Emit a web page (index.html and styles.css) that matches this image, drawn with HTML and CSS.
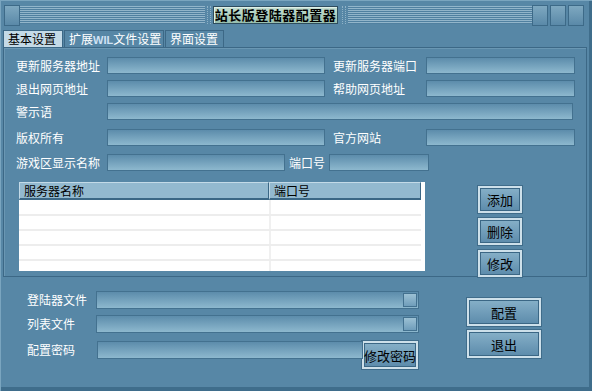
FILE: index.html
```html
<!DOCTYPE html>
<html lang="zh-CN">
<head>
  <meta charset="UTF-8">
  <title>站长版登陆器配置器</title>
  <link rel="stylesheet" href="styles.css">
</head>
<body>

  <div class="window">
    <div class="titlebar">
      <span class="tbtn"></span>
      <span class="stripes left"></span>
      <span class="dots"></span>
      <div class="title">站长版登陆器配置器</div>
      <span class="dots"></span>
      <span class="stripes right"></span>
      <span class="tbtn"></span>
      <span class="tbtn"></span>
      <span class="tbtn"></span>
    </div>

    <div class="tabs">
      <div class="tab active t1">基本设置</div>
      <div class="tab t2">扩展<span class="latin">WIL</span>文件设置</div>
      <div class="tab t3">界面设置</div>
    </div>

    <div class="panel">
      <div class="row">
        <span class="lbl">更新服务器地址</span>
        <span class="field w218"></span>
        <span class="lbl2">更新服务器端口</span>
        <span class="field w149"></span>
      </div>
      <div class="row">
        <span class="lbl">退出网页地址</span>
        <span class="field w218"></span>
        <span class="lbl2">帮助网页地址</span>
        <span class="field w149"></span>
      </div>
      <div class="row">
        <span class="lbl">警示语</span>
        <span class="field w466"></span>
      </div>
      <div class="row gap3">
        <span class="lbl">版权所有</span>
        <span class="field w218"></span>
        <span class="lbl2">官方网站</span>
        <span class="field w149"></span>
      </div>
      <div class="row gap2">
        <span class="lbl">游戏区显示名称</span>
        <span class="field w178"></span>
        <span class="lbl3">端口号</span>
        <span class="field w100"></span>
      </div>

      <div class="list-area">
        <div class="grid">
          <div class="grid-head">
            <span class="col name">服务器名称</span>
            <span class="col port">端口号</span>
          </div>
          <div class="grid-row"><span class="cell name"></span><span class="cell"></span></div>
          <div class="grid-row"><span class="cell name"></span><span class="cell"></span></div>
          <div class="grid-row"><span class="cell name"></span><span class="cell"></span></div>
          <div class="grid-row"><span class="cell name"></span><span class="cell"></span></div>
          <div class="grid-row last"><span class="cell name"></span><span class="cell"></span></div>
        </div>
        <div class="side-btns">
          <button class="btn small">添加</button>
          <button class="btn small">删除</button>
          <button class="btn small">修改</button>
        </div>
      </div>
    </div>

    <div class="bottom">
      <div class="files">
        <div class="frow">
          <span class="flbl">登陆器文件</span>
          <span class="field w323"><span class="pick"></span></span>
        </div>
        <div class="frow">
          <span class="flbl">列表文件</span>
          <span class="field w323"><span class="pick"></span></span>
        </div>
        <div class="frow pw">
          <span class="flbl">配置密码</span>
          <span class="field w266"></span>
          <button class="btn pwbtn">修改密码</button>
        </div>
      </div>
      <div class="main-btns">
        <button class="btn big">配置</button>
        <button class="btn big">退出</button>
      </div>
    </div>
  </div>

</body>
</html>
```

FILE: styles.css
```css
body {
  margin: 0;
  background: #5787a6;
  font-family: "Noto Sans CJK SC", "DejaVu Sans", sans-serif;
  font-size: 12px;
}

.window {
  width: 592px;
  height: 391px;
  box-sizing: border-box;
  background: #5787a6;
  box-shadow: inset 1px 1px 0 #7aa5bf, inset -3px -4px 0 #3f6d8b;
  overflow: hidden;
}

/* title bar */
.titlebar {
  display: flex;
  align-items: flex-start;
  height: 28px;
  padding: 5px 0 0 4px;
  box-sizing: border-box;
}

.tbtn {
  width: 16px;
  height: 21px;
  box-sizing: border-box;
  border: 1px solid #3d6a88;
  background: linear-gradient(#7ea8c0, #5a89a8);
  margin-right: 2px;
}

.tbtn:first-child {
  margin-right: 0;
}

.stripes {
  height: 18px;
  margin-top: 1px;
  background: repeating-linear-gradient(to bottom, #92b5ca 0 1px, #5080a0 1px 2px);
}

.stripes.left { width: 185px; }
.stripes.right { width: 184px; }

.dots {
  width: 2px;
  height: 18px;
  margin: 1px 2px 0;
  border-left: 1px dotted #8fb2c7;
  border-right: 1px dotted #8fb2c7;
}

.title {
  width: 125px;
  height: 18px;
  margin: 1px 2px 0 0;
  box-sizing: border-box;
  border: 1px solid #2e4d5e;
  box-shadow: inset 1px 1px 0 #e0f0e8;
  background: linear-gradient(#c5e0d2, #98bfae);
  color: #000;
  font-weight: bold;
  font-size: 13px;
  line-height: 16px;
  text-align: center;
  letter-spacing: 0.5px;
}

/* tabs */
.tabs {
  display: flex;
  margin: 2px 0 0 3px;
  height: 17px;
}

.tab {
  box-sizing: border-box;
  height: 17px;
  border: 1px solid #3c6886;
  border-bottom: none;
  color: #fff;
  line-height: 15px;
  padding-left: 4px;
  margin-right: 1px;
}

.tab.active {
  background: #c4dae7;
  color: #000;
}

.t1 { width: 60px; }
.t2 { width: 100px; }
.t3 { width: 59px; }

.latin {
  color: #d0e2f4;
  font-family: "Liberation Sans", sans-serif;
  font-weight: bold;
  font-size: 11px;
}

/* panel */
.panel {
  height: 230px;
  margin: 0 5px 0 3px;
  box-sizing: border-box;
  border: 1px solid #3c6886;
  box-shadow: inset 1px 1px 0 #6a97b3;
  padding: 9px 0 0 12px;
  display: flex;
  flex-direction: column;
  gap: 6px;
}

.row {
  display: flex;
  align-items: center;
  height: 17px;
  color: #fff;
}

.row.gap3 { margin-top: 3px; }
.row.gap2 { margin-top: 2px; }

.lbl {
  width: 91px;
  line-height: 17px;
}

.lbl2 {
  width: 93px;
  margin-left: 8px;
}

.lbl3 {
  width: 40px;
  margin-left: 4px;
}

.field {
  display: block;
  position: relative;
  height: 17px;
  box-sizing: border-box;
  border: 1px solid #43718f;
  background: linear-gradient(#5c8cab, #8db8ce);
}

.w100 { width: 100px; }
.w149 { width: 149px; }
.w178 { width: 178px; }
.w218 { width: 218px; }
.w266 { width: 266px; height: 18px; }
.w323 { width: 323px; height: 18px; }
.w466 { width: 466px; }

/* server list */
.list-area {
  display: flex;
  margin-top: 5px;
}

.grid {
  width: 406px;
  height: 89px;
  margin-left: 3px;
  background: #fff;
  box-sizing: border-box;
  padding-right: 4px;
  overflow: hidden;
}

.grid-head {
  display: flex;
  height: 18px;
  background: #93b9cf;
  color: #000;
}

.col {
  box-sizing: border-box;
  height: 18px;
  line-height: 16px;
  padding-left: 4px;
  border-top: 1px solid #c3dae7;
  border-left: 1px solid #c3dae7;
  border-right: 1px solid #3b6785;
  border-bottom: 2px solid #3b6785;
}

.col.name { width: 250px; }
.col.port { flex: 1; }

.grid-row {
  display: flex;
  height: 13px;
  border-bottom: 2px solid #ededed;
}

.grid-row:nth-child(2) { height: 14px; }
.grid-row.last { border-bottom: none; height: 12px; }

.cell.name {
  width: 250px;
  border-right: 2px solid #f0f0f0;
}

.side-btns {
  display: flex;
  flex-direction: column;
  gap: 5px;
  margin: 4px 0 0 53px;
}

.btn {
  font-family: inherit;
  font-size: 13px;
  color: #000;
  padding: 0;
  box-sizing: border-box;
  border: 2px solid #cde0ea;
  outline: 1px solid #3f6c8a;
  box-shadow: inset 0 0 0 1px #3b6785;
  background: linear-gradient(#86b0c8, #5c8bab);
  cursor: pointer;
}

.btn.small {
  width: 44px;
  height: 27px;
}

/* bottom part */
.bottom {
  display: flex;
  padding: 14px 0 0 27px;
}

.files {
  display: flex;
  flex-direction: column;
  gap: 6px;
}

.frow {
  display: flex;
  align-items: flex-start;
  color: #fff;
}

.frow.pw { margin-top: 2px; }

.flbl {
  width: 69px;
  line-height: 18px;
}

.frow.pw .flbl { width: 70px; }

.pick {
  position: absolute;
  right: 1px;
  top: 1px;
  width: 14px;
  height: 14px;
  box-sizing: border-box;
  border: 1px solid #43718f;
  background: linear-gradient(#9cc1d4, #6f9dba);
}

.pwbtn {
  width: 56px;
  height: 28px;
  margin-left: -1px;
}

.main-btns {
  display: flex;
  flex-direction: column;
  gap: 4px;
  margin: 7px 0 0 48px;
}

.btn.big {
  width: 74px;
  height: 28px;
}
```
